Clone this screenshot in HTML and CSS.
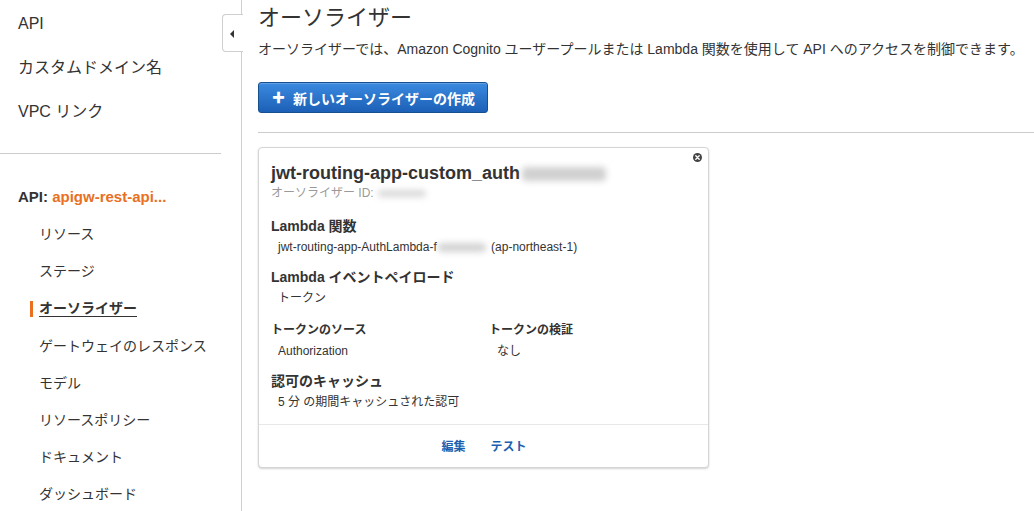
FILE: index.html
```html
<!DOCTYPE html>
<html lang="ja">
<head>
<meta charset="utf-8">
<title>オーソライザー</title>
<link rel="stylesheet" href="styles.css">
</head>
<body>
<div class="page">
  <aside class="sidebar">
    <ul class="nav-top">
      <li>API</li>
      <li>カスタムドメイン名</li>
      <li>VPC リンク</li>
    </ul>
    <div class="side-divider"></div>
    <div class="api-header">API: <span class="api-name">apigw-rest-api...</span></div>
    <ul class="nav-sub">
      <li>リソース</li>
      <li>ステージ</li>
      <li class="active"><span class="active-text">オーソライザー</span></li>
      <li>ゲートウェイのレスポンス</li>
      <li>モデル</li>
      <li>リソースポリシー</li>
      <li>ドキュメント</li>
      <li>ダッシュボード</li>
    </ul>
    <div class="collapse-tab"><span class="tri"></span></div>
  </aside>
  <main class="main">
    <h1 class="title">オーソライザー</h1>
    <p class="desc">オーソライザーでは、Amazon Cognito ユーザープールまたは Lambda 関数を使用して API へのアクセスを制御できます。</p>
    <button class="btn-create"><span class="plus">✚</span>新しいオーソライザーの作成</button>
    <div class="main-divider"></div>
    <section class="card">
      <span class="close-icon">
        <svg width="9" height="9" viewBox="0 0 9 9"><circle cx="4.5" cy="4.5" r="4.5" fill="#444"/><path d="M2.8 2.8L6.2 6.2M6.2 2.8L2.8 6.2" stroke="#fff" stroke-width="1.4" stroke-linecap="round"/></svg>
      </span>
      <div class="card-body">
        <h2 class="card-title">jwt-routing-app-custom_auth<span class="blur blur-title"></span></h2>
        <div class="card-id">オーソライザー ID:<span class="blur blur-id"></span></div>
        <div class="label first">Lambda 関数</div>
        <div class="value">jwt-routing-app-AuthLambda-f<span class="blur blur-fn"></span> (ap-northeast-1)</div>
        <div class="label">Lambda イベントペイロード</div>
        <div class="value">トークン</div>
        <div class="cols">
          <div class="col">
            <div class="sublabel">トークンのソース</div>
            <div class="value">Authorization</div>
          </div>
          <div class="col">
            <div class="sublabel">トークンの検証</div>
            <div class="value">なし</div>
          </div>
        </div>
        <div class="label">認可のキャッシュ</div>
        <div class="value">5 分 の期間キャッシュされた認可</div>
      </div>
      <div class="card-footer">
        <a class="link">編集</a>
        <a class="link">テスト</a>
      </div>
    </section>
  </main>
</div>
</body>
</html>
```

FILE: styles.css
```css
* { box-sizing: border-box; }
html, body { margin: 0; padding: 0; }
body {
  font-family: "Liberation Sans", "Noto Sans CJK JP", sans-serif;
  color: #333;
  background: #fff;
  width: 1034px;
  height: 511px;
  overflow: hidden;
}
ul { list-style: none; margin: 0; padding: 0; }

.page { display: flex; height: 511px; }

.sidebar {
  position: relative;
  width: 242px;
  flex: 0 0 242px;
  border-right: 1px solid #cfcfcf;
  height: 511px;
}
.nav-top { padding-top: 2px; }
.nav-top li {
  height: 44px;
  line-height: 44px;
  font-size: 16px;
  padding-left: 18px;
  color: #333;
}
.side-divider {
  margin-top: 19px;
  width: 221px;
  height: 1px;
  background: #cccccc;
}
.api-header {
  margin-top: 24px;
  height: 37px;
  line-height: 37px;
  padding-left: 18px;
  font-size: 15px;
  font-weight: bold;
  color: #333;
}
.api-name { color: #e8701f; }
.nav-sub { padding-top: 1px; }
.nav-sub li {
  position: relative;
  height: 37.2px;
  line-height: 37px;
  padding-left: 39px;
  font-size: 14px;
  color: #333;
}
.nav-sub li.active { font-weight: bold; }
.nav-sub li.active::before {
  content: "";
  position: absolute;
  left: 30px;
  top: 11px;
  width: 3px;
  height: 16px;
  background: #e8701f;
}
.active-text {
  text-decoration: underline;
  text-underline-offset: 3px;
  text-decoration-thickness: 1px;
}
.collapse-tab {
  position: absolute;
  left: 222px;
  top: 14px;
  width: 21px;
  height: 38px;
  background: #fff;
  border: 1px solid #cfcfcf;
  border-right: none;
  border-radius: 4px 0 0 4px;
}
.tri {
  position: absolute;
  left: 7px;
  top: 15px;
  width: 0;
  height: 0;
  border-top: 4px solid transparent;
  border-bottom: 4px solid transparent;
  border-right: 4px solid #333;
}

.main {
  flex: 1;
  padding-left: 16px;
}
.title {
  margin: 0;
  padding-top: 3px;
  height: 33px;
  line-height: 30px;
  font-size: 22px;
  font-weight: normal;
  color: #333;
}
.desc {
  margin: 6px 0 0 0;
  line-height: 20px;
  font-size: 14px;
  color: #333;
}
.btn-create {
  display: flex;
  align-items: center;
  margin-top: 23px;
  height: 31px;
  width: 230px;
  padding: 0 0 0 13px;
  border: 1px solid #17508f;
  border-radius: 3px;
  background: linear-gradient(#3a8ae0, #1c60b6);
  color: #fff;
  font-family: "Liberation Sans", "Noto Sans CJK JP", sans-serif;
  font-size: 14px;
  font-weight: bold;
  box-shadow: inset 0 1px 0 rgba(255,255,255,0.2);
}
.plus {
  font-size: 13px;
  margin-right: 8px;
  line-height: 1;
}
.main-divider {
  margin-top: 19px;
  height: 1px;
  background: #cccccc;
}

.card {
  position: relative;
  margin-top: 14px;
  width: 451px;
  height: 321px;
  border: 1px solid #d5d5d5;
  border-radius: 4px;
  box-shadow: 0 1px 2px rgba(0,0,0,0.18);
  background: #fff;
}
.close-icon {
  position: absolute;
  right: 6px;
  top: 5px;
  width: 9px;
  height: 9px;
  display: block;
  line-height: 0;
}
.card-body {
  padding: 14px 12px 0 12px;
  height: 277px;
  border-bottom: 1px solid #e8e8e8;
}
.card-title {
  margin: 0;
  height: 23px;
  line-height: 23px;
  font-size: 18px;
  font-weight: bold;
  color: #333;
  display: flex;
  align-items: center;
}
.card-id {
  height: 16px;
  line-height: 16px;
  font-size: 12px;
  color: #9a9a9a;
  display: flex;
  align-items: center;
}
.blur {
  display: inline-block;
  background: #c8c8c8;
  filter: blur(3px);
  border-radius: 4px;
}
.blur-title { width: 84px; height: 14px; margin-left: 2px; opacity: 0.85; }
.blur-id { width: 48px; height: 7px; margin-left: 4px; opacity: 0.7; }
.blur-fn { width: 48px; height: 9px; margin: 0 2px 0 1px; vertical-align: middle; opacity: 0.8; }
.label {
  margin-top: 11px;
  height: 20px;
  line-height: 20px;
  font-size: 14px;
  font-weight: bold;
  color: #333;
}
.label.first { margin-top: 15px; }
.value {
  margin-top: 2px;
  height: 18px;
  line-height: 18px;
  font-size: 12px;
  padding-left: 7px;
  color: #333;
}
.cols {
  display: flex;
  margin-top: 13px;
}
.col { flex: 0 0 218px; }
.col + .col { flex: 1 1 auto; }
.col + .col .value { padding-left: 8px; }
.sublabel {
  height: 20px;
  line-height: 20px;
  font-size: 12px;
  font-weight: bold;
  color: #333;
}
.card-footer {
  height: 41px;
  display: flex;
  justify-content: center;
  align-items: center;
  gap: 25px;
  padding-left: 1px;
}
.link {
  font-size: 12px;
  font-weight: bold;
  color: #1d5fae;
  cursor: pointer;
}
```
